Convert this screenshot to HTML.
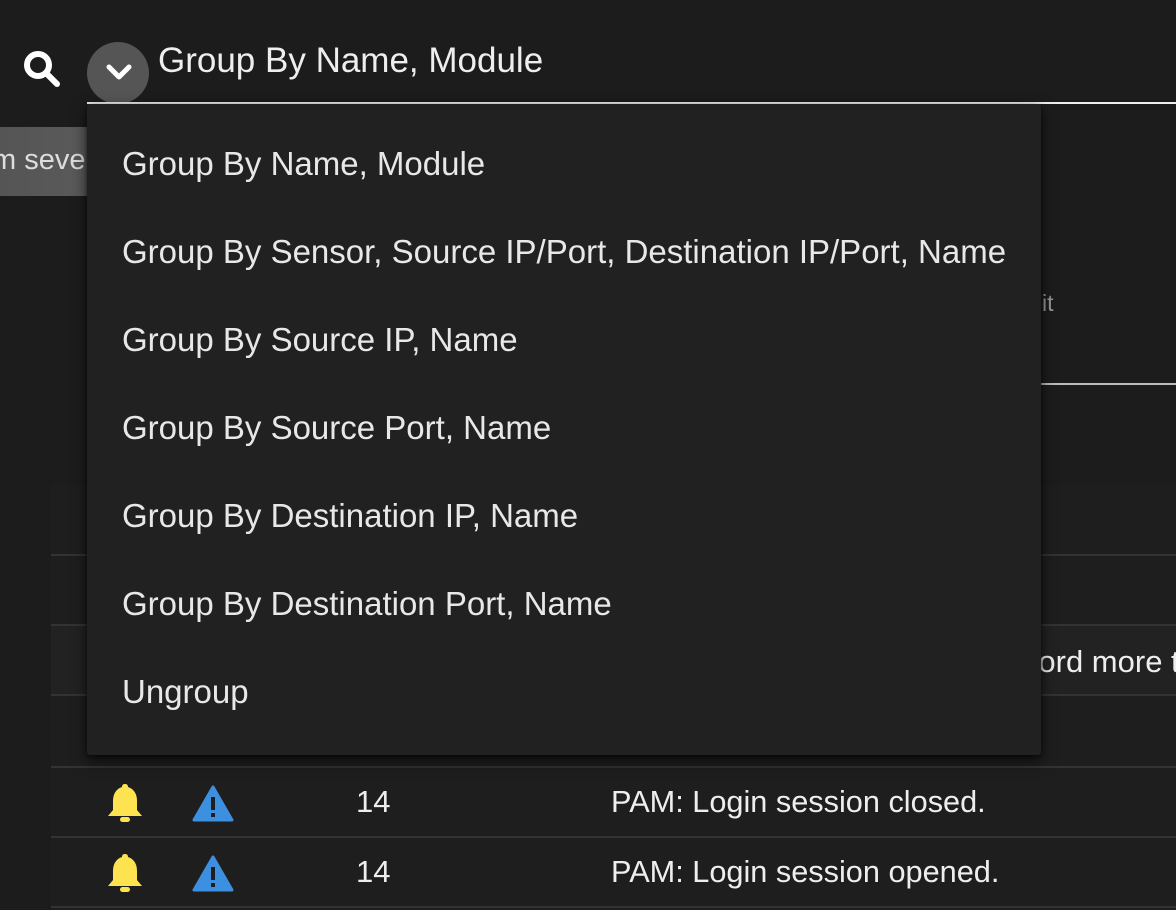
<!DOCTYPE html>
<html><head><style>
*{margin:0;padding:0;box-sizing:border-box}
body{width:1176px;height:910px;background:#1c1c1c;font-family:"Liberation Sans",sans-serif;color:#eee;position:relative;overflow:hidden}
.abs{position:absolute}
.hl{position:absolute;left:51px;right:0;height:2px;background:#333}
.menu{position:absolute;left:87px;top:104px;width:954px;height:651px;background:#212121;box-shadow:0 6px 16px rgba(0,0,0,.6),0 2px 4px rgba(0,0,0,.5);border-radius:3px}
.menu div{position:absolute;left:35px;font-size:33px;color:#e8e8e8;white-space:nowrap}
.row{position:absolute;font-size:31px;color:#eee;white-space:nowrap}
</style></head><body>
<div class="abs" style="left:51px;top:485px;right:0;bottom:0;background:#1e1e1e"></div>
<div class="abs" style="left:51px;top:626px;right:0;height:69px;background:#222"></div>
<div class="hl" style="top:554px"></div>
<div class="hl" style="top:624px"></div>
<div class="hl" style="top:694px"></div>
<div class="hl" style="top:766px"></div>
<div class="hl" style="top:836px"></div>
<div class="hl" style="top:906px"></div>

<div class="abs" style="left:0;top:127px;width:90px;height:69px;background:linear-gradient(90deg,#555,#5a5a5a);color:#ddd;font-size:29px;line-height:66px;overflow:hidden;white-space:nowrap"><span style="margin-left:-8px">m seve</span></div>

<svg class="abs" style="left:19px;top:46px" width="46" height="46" viewBox="0 0 46 46"><circle cx="19" cy="19" r="11" fill="none" stroke="#fff" stroke-width="6"/><line x1="27" y1="27" x2="38" y2="38" stroke="#fff" stroke-width="6" stroke-linecap="round"/></svg>
<div class="abs" style="left:87px;top:42px;width:62px;height:62px;border-radius:50%;background:#555"></div>
<svg class="abs" style="left:103px;top:60px" width="32" height="24" viewBox="0 0 32 24"><polyline points="6,7 16,17 26,7" fill="none" stroke="#fff" stroke-width="5" stroke-linecap="round" stroke-linejoin="round"/></svg>
<div class="abs" style="left:158px;top:41px;font-size:35px;color:#eee;white-space:nowrap">Group By Name, Module</div>
<div class="abs" style="left:87px;top:102px;right:0;height:2px;background:#eee"></div>

<div class="abs" style="left:1042px;top:290px;font-size:23px;color:#999">it</div>
<div class="abs" style="left:1040px;top:383px;right:0;height:2px;background:#bbb"></div>
<div class="row" style="left:1016px;top:644px">word more than</div>

<div class="menu">
<div style="top:41px">Group By Name, Module</div>
<div style="top:129px">Group By Sensor, Source IP/Port, Destination IP/Port, Name</div>
<div style="top:217px">Group By Source IP, Name</div>
<div style="top:305px">Group By Source Port, Name</div>
<div style="top:393px">Group By Destination IP, Name</div>
<div style="top:481px">Group By Destination Port, Name</div>
<div style="top:569px">Ungroup</div>
</div>

<svg class="abs" style="left:106px;top:783px" width="38" height="42" viewBox="0 0 38 42"><path d="M19 1c-2 0-3 1-3 3c-6 2-9 7-9 14v9l-5 6h34l-5-6v-9c0-7-3-12-9-14c0-2-1-3-3-3z" fill="#fde350"/><rect x="14" y="34" width="10" height="5" rx="2.5" fill="#fde350"/></svg>
<svg class="abs" style="left:192px;top:785px" width="42" height="38" viewBox="0 0 42 38"><path d="M21 2L2 35h38z" fill="#3d8fe0" stroke="#3d8fe0" stroke-width="3" stroke-linejoin="round"/><rect x="19" y="12" width="4" height="13" fill="#1e1e1e"/><rect x="19" y="28" width="4" height="4" fill="#1e1e1e"/></svg>
<div class="row" style="left:356px;top:784px">14</div>
<div class="row" style="left:611px;top:784px;font-size:30.7px">PAM: Login session closed.</div>

<svg class="abs" style="left:106px;top:853px" width="38" height="42" viewBox="0 0 38 42"><path d="M19 1c-2 0-3 1-3 3c-6 2-9 7-9 14v9l-5 6h34l-5-6v-9c0-7-3-12-9-14c0-2-1-3-3-3z" fill="#fde350"/><rect x="14" y="34" width="10" height="5" rx="2.5" fill="#fde350"/></svg>
<svg class="abs" style="left:192px;top:855px" width="42" height="38" viewBox="0 0 42 38"><path d="M21 2L2 35h38z" fill="#3d8fe0" stroke="#3d8fe0" stroke-width="3" stroke-linejoin="round"/><rect x="19" y="12" width="4" height="13" fill="#1e1e1e"/><rect x="19" y="28" width="4" height="4" fill="#1e1e1e"/></svg>
<div class="row" style="left:356px;top:854px">14</div>
<div class="row" style="left:611px;top:854px;font-size:30.7px">PAM: Login session opened.</div>
</body></html>
